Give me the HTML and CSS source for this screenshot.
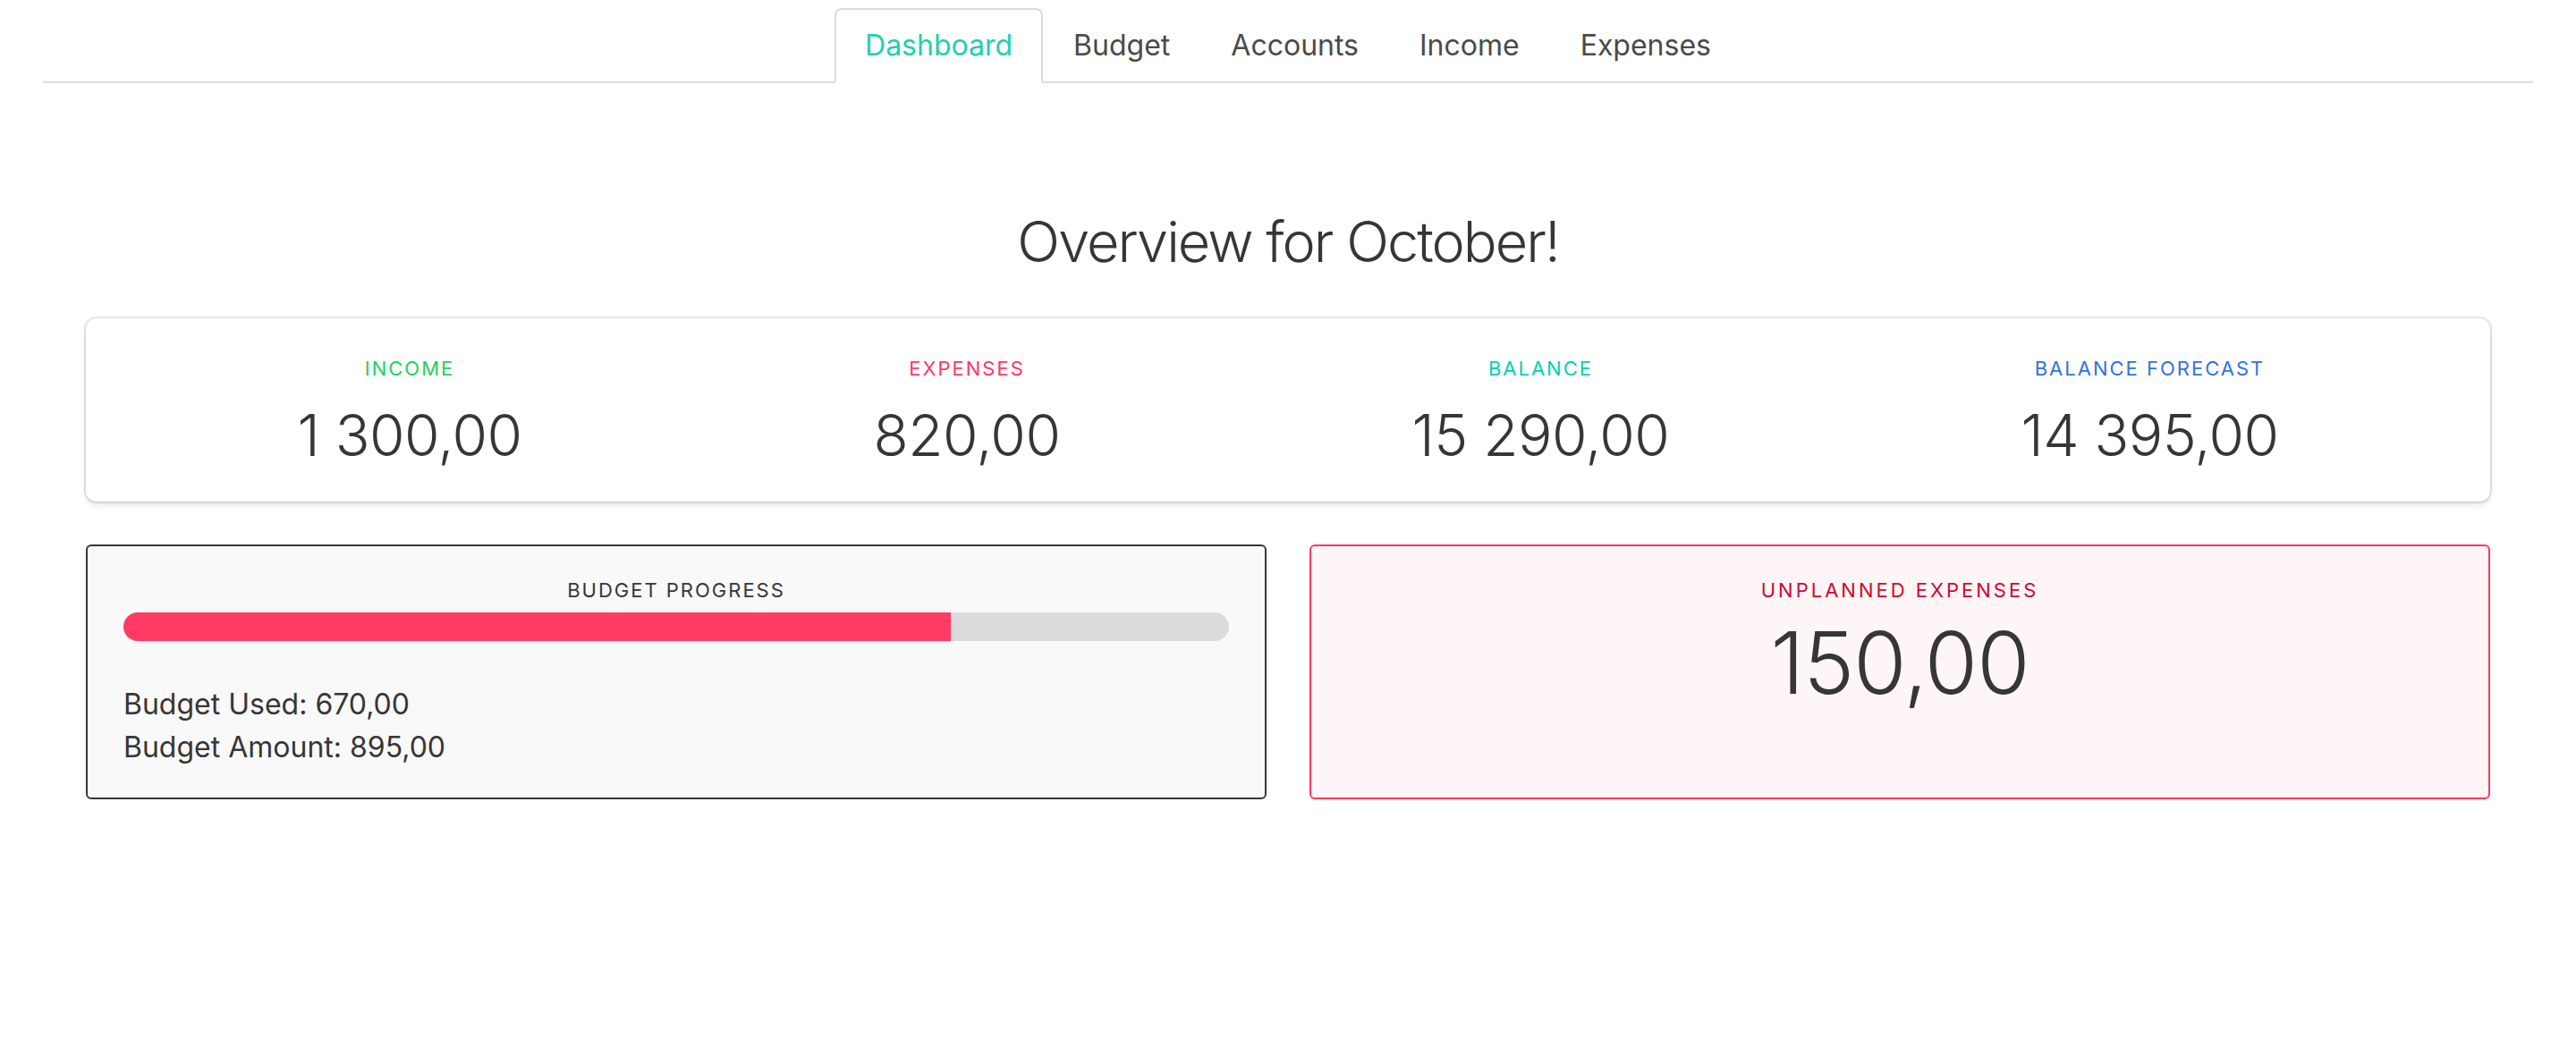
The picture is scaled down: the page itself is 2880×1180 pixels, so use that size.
FILE: index.html
```html
<!DOCTYPE html>
<html lang="en">
<head>
<meta charset="utf-8">
<title>Dashboard</title>
<link rel="stylesheet" href="styles.css">
</head>
<body>
  <nav class="tabs">
    <ul class="tab-list">
      <li class="tab is-active"><a class="tab-link">Dashboard</a></li>
      <li class="tab"><a class="tab-link">Budget</a></li>
      <li class="tab"><a class="tab-link">Accounts</a></li>
      <li class="tab"><a class="tab-link">Income</a></li>
      <li class="tab"><a class="tab-link">Expenses</a></li>
    </ul>
  </nav>

  <main class="container">
    <h1 class="page-title">Overview for October!</h1>

    <section class="stats-box">
      <div class="level-item">
        <p class="heading heading-income">Income</p>
        <p class="stat-value">1&nbsp;300,00</p>
      </div>
      <div class="level-item">
        <p class="heading heading-expenses">Expenses</p>
        <p class="stat-value">820,00</p>
      </div>
      <div class="level-item">
        <p class="heading heading-balance">Balance</p>
        <p class="stat-value">15&nbsp;290,00</p>
      </div>
      <div class="level-item">
        <p class="heading heading-forecast">Balance Forecast</p>
        <p class="stat-value">14&nbsp;395,00</p>
      </div>
    </section>

    <section class="columns">
      <div class="card card-budget">
        <p class="heading heading-dark">Budget Progress</p>
        <div class="progress"><div class="progress-fill" style="width: 74.86%"></div></div>
        <p class="budget-line">Budget Used: 670,00</p>
        <p class="budget-line">Budget Amount: 895,00</p>
      </div>
      <div class="card card-unplanned">
        <p class="heading heading-unplanned">Unplanned Expenses</p>
        <p class="big-value">150,00</p>
      </div>
    </section>
  </main>
</body>
</html>
```

FILE: styles.css
```css
* {
  box-sizing: border-box;
}

html, body {
  margin: 0;
  padding: 0;
  background: #ffffff;
}

body {
  font-family: Inter, "Noto Sans", "Liberation Sans", sans-serif;
  color: #363636;
  font-size: 32px;
  line-height: 1.5;
}

p {
  margin: 0;
}

/* Tabs */
.tabs {
  padding: 9px 48px 0;
}

.tab-list {
  list-style: none;
  margin: 0;
  padding: 0;
  display: flex;
  justify-content: center;
  border-bottom: 2px solid #dbdbdb;
}

.tab {
  margin-bottom: -2px;
}

.tab-link {
  display: block;
  padding: 16px 32px;
  border: 2px solid transparent;
  border-radius: 8px 8px 0 0;
  color: #4a4a4a;
  font-size: 32px;
  line-height: 48px;
  cursor: pointer;
}

.tab.is-active .tab-link {
  border-color: #dbdbdb;
  border-bottom-color: #ffffff;
  background: #ffffff;
  color: #1fcfb1;
}

/* Main */
.container {
  width: 2688px;
  margin: 0 auto;
}

.page-title {
  margin: 141px 0 0;
  text-align: center;
  font-size: 63px;
  font-weight: 300;
  letter-spacing: -2px;
  line-height: 72px;
  color: #363636;
}

.stats-box {
  margin-top: 50px;
  display: flex;
  padding: 40px 40px 38px;
  border-radius: 12px;
  background: #ffffff;
  box-shadow: 0 4px 6px rgba(10, 10, 10, 0.1), 0 0 0 2px rgba(10, 10, 10, 0.1);
}

.level-item {
  flex: 1 1 auto;
  display: flex;
  flex-direction: column;
  align-items: center;
  text-align: center;
}

.heading {
  font-size: 22px;
  line-height: 33px;
  letter-spacing: 2px;
  text-transform: uppercase;
}

.stats-box .heading {
  margin-bottom: 22px;
}

.heading-income { color: #23d160; }
.heading-expenses { color: #ff3860; }
.heading-balance { color: #00d1b2; }
.heading-forecast { color: #3273dc; }
.heading-dark { color: #363636; }
.heading-unplanned { color: #cd0930; letter-spacing: 3px; }

.stat-value {
  font-size: 64px;
  font-weight: 300;
  line-height: 72px;
  letter-spacing: -0.5px;
  color: #363636;
  white-space: nowrap;
}

/* Second row */
.columns {
  margin-top: 48px;
  display: grid;
  grid-template-columns: 1fr 1fr;
  gap: 48px;
}

.card {
  height: 285px;
  border: 2px solid;
  border-radius: 6px;
  padding: 33px 40px 30px;
}

.card-budget {
  background: #f9f9f9;
  border-color: #363636;
}

.card-budget .heading {
  text-align: center;
  margin-bottom: 8px;
}

.card-unplanned {
  background: #fef5f7;
  border-color: #ff3860;
  text-align: center;
}

.progress {
  height: 32px;
  border-radius: 16px;
  background: #dbdbdb;
  overflow: hidden;
  margin-bottom: 47px;
}

.progress-fill {
  height: 100%;
  background: #ff3b63;
}

.budget-line {
  font-size: 32px;
  line-height: 48px;
  color: #363636;
}

.card-unplanned .heading {
  margin-bottom: 10px;
}

.big-value {
  font-size: 96px;
  font-weight: 300;
  line-height: 108px;
  letter-spacing: -1px;
  color: #363636;
}
```
